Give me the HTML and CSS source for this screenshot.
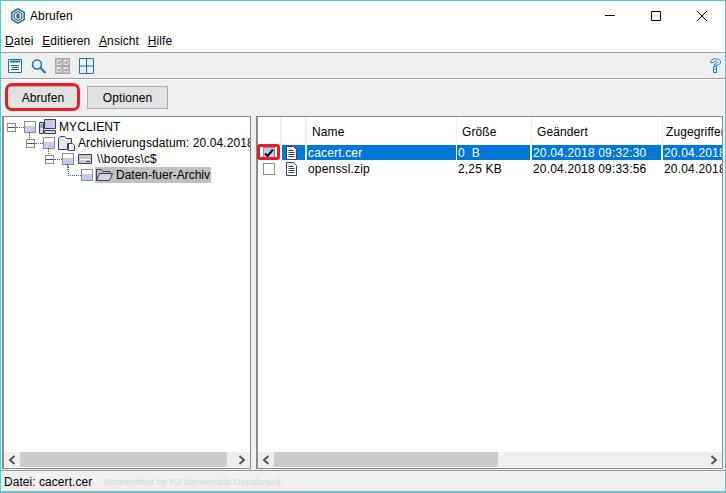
FILE: index.html
```html
<!DOCTYPE html>
<html lang="de">
<head>
<meta charset="utf-8">
<title>Abrufen</title>
<link rel="stylesheet" href="styles.css">
</head>
<body>
<div class="window">
  <header class="titlebar">
    <svg class="appicon" width="16" height="16" viewBox="0 0 16 16"><path d="M8 .8 14.200 4.300v7.400L8 15.200 1.800 11.700V4.300z" fill="#e4f2fa" stroke="#0a6aa8" stroke-width="1.400"/><path d="M8 3.500 11.800 5.600v4.800L8 12.500 4.200 10.400V5.600z" fill="#fff" stroke="#1d3f6a"/><path d="M6.500 5.500h3v5h-3z" fill="#2d5f96"/></svg>
    <span class="title">Abrufen</span>
    <span class="spacer"></span>
    <div class="winbtn"><svg width="12" height="12" viewBox="0 0 12 12"><path d="M1 5.500h10" stroke="#000"/></svg></div>
    <div class="winbtn"><svg width="12" height="12" viewBox="0 0 12 12"><path d="M1.500 1.500h9v9h-9z" fill="none" stroke="#000"/></svg></div>
    <div class="winbtn"><svg width="12" height="12" viewBox="0 0 12 12"><path d="M1 1l10 10M11 1 1 11" stroke="#000"/></svg></div>
  </header>
  <nav class="menubar">
    <span><u>D</u>atei</span><span><u>E</u>ditieren</span><span><u>A</u>nsicht</span><span><u>H</u>ilfe</span>
  </nav>
  <div class="toolbar">
    <svg width="14" height="16" viewBox="0 0 14 16"><path d="M.5 1.500h13v13H.500z" fill="#fff" stroke="#0a78c2"/><path d="M2 3.500h10" stroke="#0a78c2" stroke-width="2"/><path d="M3 7.500h8M4 9.500h7M3 11.500h8" stroke="#1a5c90"/></svg>
    <svg width="15" height="16" viewBox="0 0 15 16"><circle cx="6" cy="6.500" r="4.500" fill="none" stroke="#0a78c2" stroke-width="1.600"/><path d="M9.500 10l5 5" stroke="#0a78c2" stroke-width="2"/></svg>
    <svg width="15" height="16" viewBox="0 0 15 16"><path d="M0 0h15v16H0z" fill="#a9a9a9"/><path d="M1.500 1.500h5v5.500h-5zM8.500 1.500h5v5.500h-5zM1.500 9h5v5.500h-5zM8.500 9h5v5.500h-5z" fill="#e4e4e4"/><path d="M2.500 4l1.500 1.600 1.800-2.600M9.500 4l1.500 1.600 1.800-2.600M2.500 11.500l1.500 1.600 1.800-2.600M9.500 11.500l1.500 1.600 1.800-2.600" fill="none" stroke="#777"/></svg>
    <svg width="15" height="16" viewBox="0 0 15 16"><path d="M.5.500h14v15H.500zM7.500.500v15M.500 8h14" fill="none" stroke="#0a78c2"/></svg>
    <span class="spacer"></span>
    <svg width="11" height="16" viewBox="0 0 11 16"><path d="M.5 4.500C.5 2 2.500.8 5.500.8s5 1.200 5 3.200c0 2-2 2.800-3.500 3.200H4.500V6c1.500 0 3-.5 3-1.800 0-.8-1-1.200-2-1.200-1.200 0-2 .5-2 1.500z" fill="#fff" stroke="#0a86d0"/><path d="M3.500 8.500h3v6h-3z" fill="#fff" stroke="#0a86d0"/><path d="M3.500 11h3" stroke="#0a86d0"/></svg>
  </div>
  <div class="actions">
    <button class="btn first">Abrufen</button>
    <button class="btn second">Optionen</button>
  </div>
  <main class="panes">
    <section class="pane tree">
      <div class="paneview">
        <div class="node d0"><i class="exp"></i><i class="dots"></i><i class="state"></i>
          <svg class="nicon" width="17" height="16" viewBox="0 0 17 16"><path d="M5.500.5h11v9h-11z" fill="#c8c8f0" stroke="#3d3d66"/><path d="M.5 3.500h4v11h-4z" fill="#d8d8e4" stroke="#3d3d66"/><path d="M5.500 11.500h11v3h-11z" fill="#d8d8e4" stroke="#3d3d66"/><path d="M1.500 6h2M1.500 8h2" stroke="#3d3d66"/></svg>
          <span>MYCLIENT</span></div>
        <div class="node d1"><i class="exp"></i><i class="dots"></i><i class="state"></i>
          <svg class="nicon" width="17" height="16" viewBox="0 0 17 16"><path d="M.5 14.500v-11l2-2h4l2 2h5v5h-4v6z" fill="#e8e8ec" stroke="#3d3d66"/><path d="M10.500 8.500h4l2 2v5h-6z" fill="#fff" stroke="#3d3d66"/></svg>
          <span>Archivierungsdatum: 20.04.2018</span></div>
        <div class="node d2"><i class="exp"></i><i class="dots"></i><i class="state"></i>
          <svg class="nicon small" width="15" height="16" viewBox="0 0 15 16"><path d="M.5 3.500h13v9h-13z" fill="#c6c6d4" stroke="#3d3d66"/><path d="M2 8.500h10" stroke="#fff"/><path d="M8 10.500h4" stroke="#3d3d66"/></svg>
          <span>\\bootes\c$</span></div>
        <div class="node d3"><i class="elbow"></i><i class="state leaf"></i>
          <div class="picked">
            <svg class="nicon" width="17" height="16" viewBox="0 0 17 16"><path d="M.5 13.500v-11h5l1.500 2h7v2" fill="#c0c0c0" stroke="#3d3d66"/><path d="M.5 13.500l3-7h13l-3 7z" fill="#d6d6d6" stroke="#3d3d66"/></svg>
            <span>Daten-fuer-Archiv</span>
          </div></div>
      </div>
      <div class="hscroll">
        <i class="arrow"><svg width="8" height="10" viewBox="0 0 8 10"><path d="M6.500 1 2 5l4.500 4" fill="none" stroke="#555" stroke-width="2"/></svg></i>
        <i class="thumb long"></i>
        <i class="arrow end"><svg width="8" height="10" viewBox="0 0 8 10"><path d="M1.500 1 6 5 1.500 9" fill="none" stroke="#555" stroke-width="2"/></svg></i>
      </div>
    </section>
    <section class="pane list">
      <div class="paneview">
        <div class="row head">
          <div class="c cb"></div><div class="c ic"></div>
          <div class="c name">Name</div><div class="c size">Größe</div><div class="c date">Geändert</div><div class="c acc">Zugegriffen</div>
        </div>
        <div class="row sel">
          <div class="c cb"><i class="check on"><svg width="10" height="10" viewBox="0 0 10 10"><path d="M1 5.500 3.500 8 9 1.500" fill="none" stroke="#000" stroke-width="2"/></svg></i></div>
          <div class="c ic"><svg width="11" height="14" viewBox="0 0 11 14"><path d="M.5.500h7l3 3v10H.500z" fill="#fff" stroke="#3d3d66"/><path d="M2.500 4.500h5M2.500 6.500h6M2.500 8.500h6M2.500 10.500h6" stroke="#3d3d66"/></svg></div>
          <div class="c name val">cacert.cer</div><div class="c size val">0&nbsp; B</div><div class="c date val">20.04.2018 09:32:30</div><div class="c acc val">20.04.2018 09:32:30</div>
        </div>
        <div class="row">
          <div class="c cb"><i class="check"></i></div>
          <div class="c ic"><svg width="11" height="14" viewBox="0 0 11 14"><path d="M.5.500h7l3 3v10H.500z" fill="#fff" stroke="#3d3d66"/><path d="M2.500 4.500h5M2.500 6.500h6M2.500 8.500h6M2.500 10.500h6" stroke="#3d3d66"/></svg></div>
          <div class="c name val">openssl.zip</div><div class="c size val">2,25 KB</div><div class="c date val">20.04.2018 09:33:56</div><div class="c acc val">20.04.2018 09:33:56</div>
        </div>
      </div>
      <div class="hscroll">
        <i class="arrow"><svg width="8" height="10" viewBox="0 0 8 10"><path d="M6.500 1 2 5l4.500 4" fill="none" stroke="#555" stroke-width="2"/></svg></i>
        <i class="thumb wide"></i>
        <i class="arrow end"><svg width="8" height="10" viewBox="0 0 8 10"><path d="M1.500 1 6 5 1.500 9" fill="none" stroke="#555" stroke-width="2"/></svg></i>
      </div>
    </section>
  </main>
  <footer class="status">
    <span>Datei: cacert.cer</span><span class="mark">Screenshot by RZ Universität Osnabrück</span>
  </footer>
  <i class="redmark rm-btn"></i>
  <i class="redmark rm-check"></i>
</div>
</body>
</html>
```
FILE: styles.css
```css
* { box-sizing: border-box; }
html, body { margin: 0; padding: 0; }
body { width: 726px; height: 493px; overflow: hidden; font: 12px "Liberation Sans", Arial, sans-serif; letter-spacing: .1px; color: #000; background: #fff; }
i { font-style: normal; display: block; flex: none; }
.window { position: relative; width: 726px; height: 493px; border: 1px solid #4dd0d4; display: flex; flex-direction: column; background: #efefef; }
.titlebar { height: 30px; background: #fff; display: flex; align-items: center; padding-left: 9px; flex: none; }
.title { margin-left: 4px; }
.spacer { flex: 1; }
.winbtn { width: 46px; height: 30px; display: flex; align-items: center; justify-content: center; }
.menubar { height: 22px; background: #fff; border-bottom: 1px solid #a3a3a3; display: flex; gap: 8.6px; padding: 3px 0 0 4px; flex: none; }
.toolbar { height: 26px; border-bottom: 1px solid #a3a3a3; display: flex; align-items: center; gap: 9px; padding: 1px 4px 0 7px; flex: none; }
.actions { height: 37px; border-top: 1px solid #fff; display: flex; gap: 8px; padding: 6px 0 0 6px; flex: none; }
.btn { height: 23px; padding: 0; font: inherit; letter-spacing: inherit; color: #000; background: #e1e1e1; border: 1px solid #adadad; }
.first { width: 72px; }
.second { width: 81px; }
.panes { height: 353px; display: flex; gap: 5px; padding: 0 0 0 1px; flex: none; }
.pane { display: flex; flex-direction: column; border: 1px solid #8a8a92; border-left-width: 2px; background: #fff; }
.tree { width: 249px; }
.list { width: 467px; }
.paneview { flex: 1; min-height: 0; overflow: hidden; }
.hscroll { height: 15px; margin-bottom: 1px; background: #efefef; display: flex; flex: none; }
.arrow { width: 16px; display: flex; align-items: center; justify-content: center; }
.arrow.end { margin-left: auto; }
.thumb { background: #cdcdcd; }
.thumb.long { width: 207px; }
.thumb.wide { width: 224px; }
.tree .paneview { padding-top: 2px; }
.node { height: 16px; display: flex; align-items: center; white-space: nowrap; }
.d0 { padding-left: 3px; }
.d1 { padding-left: 22px; }
.d2 { padding-left: 41px; }
.d3 { padding-left: 64px; }
.exp { width: 9px; height: 9px; border: 1px solid #8d8d8d; background: linear-gradient(#fff 3px, #3d4a8a 3px, #3d4a8a 4px, #fff 4px); }
.dots { width: 8px; border-top: 1px dotted #555; }
.state { position: relative; width: 12px; height: 12px; border: 1px solid #8d8d8d; background: linear-gradient(#fff 4px, #c8c8f4 4px); }
.state::after { content: ""; position: absolute; left: 4px; top: 100%; height: 6px; border-left: 1px dotted #555; }
.state.leaf::after { display: none; }
.nicon { margin-left: 3px; margin-right: 3px; flex: none; }
.nicon.small { margin-left: 4px; margin-right: 4px; }
.elbow { width: 13px; height: 10px; margin-top: -9px; border-left: 1px dotted #555; border-bottom: 1px dotted #555; }
.picked { display: flex; align-items: center; background: #c0c0c0; height: 16px; margin-left: 2px; padding-right: 1px; letter-spacing: 0; }
.picked .nicon { margin-left: 1px; }
.row { display: flex; height: 16px; }
.head { height: 28px; }
.c { height: 15px; flex: none; overflow: hidden; white-space: nowrap; display: flex; align-items: center; }
.head .c { height: 28px; padding: 2px 0 0 5px; border-right: 1px solid #efefef; }
.cb { width: 24px; padding-left: 5px; align-items: flex-start; }
.head .cb { width: 24px; border-right-width: 2px; padding: 0; }
.ic { width: 25px; justify-content: flex-start; padding-left: 4px; border-right: 2px solid #fff; }
.head .ic { border-right-width: 2px; padding: 0; }
.name { width: 150px; border-right: 1px solid #fff; }
.size { width: 75px; border-right: 2px solid #fff; }
.date { width: 131px; border-right: 2px solid #fff; }
.acc { width: 60px; }
.head .acc { padding-left: 3px; border-right: 0; }
.val { padding-left: 1px; letter-spacing: .17px; }
.sel .ic, .sel .val { background: #0078d7; color: #fff; }
.check { width: 12px; height: 12px; margin-top: 2px; border: 1px solid #8d8d8d; background: #fff; display: flex; align-items: center; justify-content: center; }
.check.on { background: #c8c8f4; }
.status { flex: 1; border-top: 1px solid #9a9aa2; border-bottom: 1px solid #aaa; margin-top: 1px; display: flex; align-items: center; gap: 12px; padding: 2px 0 0 3px; letter-spacing: .05px; }
.mark { font-size: 9.1px; letter-spacing: 0; font-weight: bold; color: #dcdcdc; }
.redmark { position: absolute; border: 3px solid #ec1c24; }
.rm-btn { left: 4px; top: 82px; width: 75px; height: 28px; border-radius: 7px; }
.rm-check { left: 256px; top: 143px; width: 23px; height: 16px; border-radius: 3px; }
```
